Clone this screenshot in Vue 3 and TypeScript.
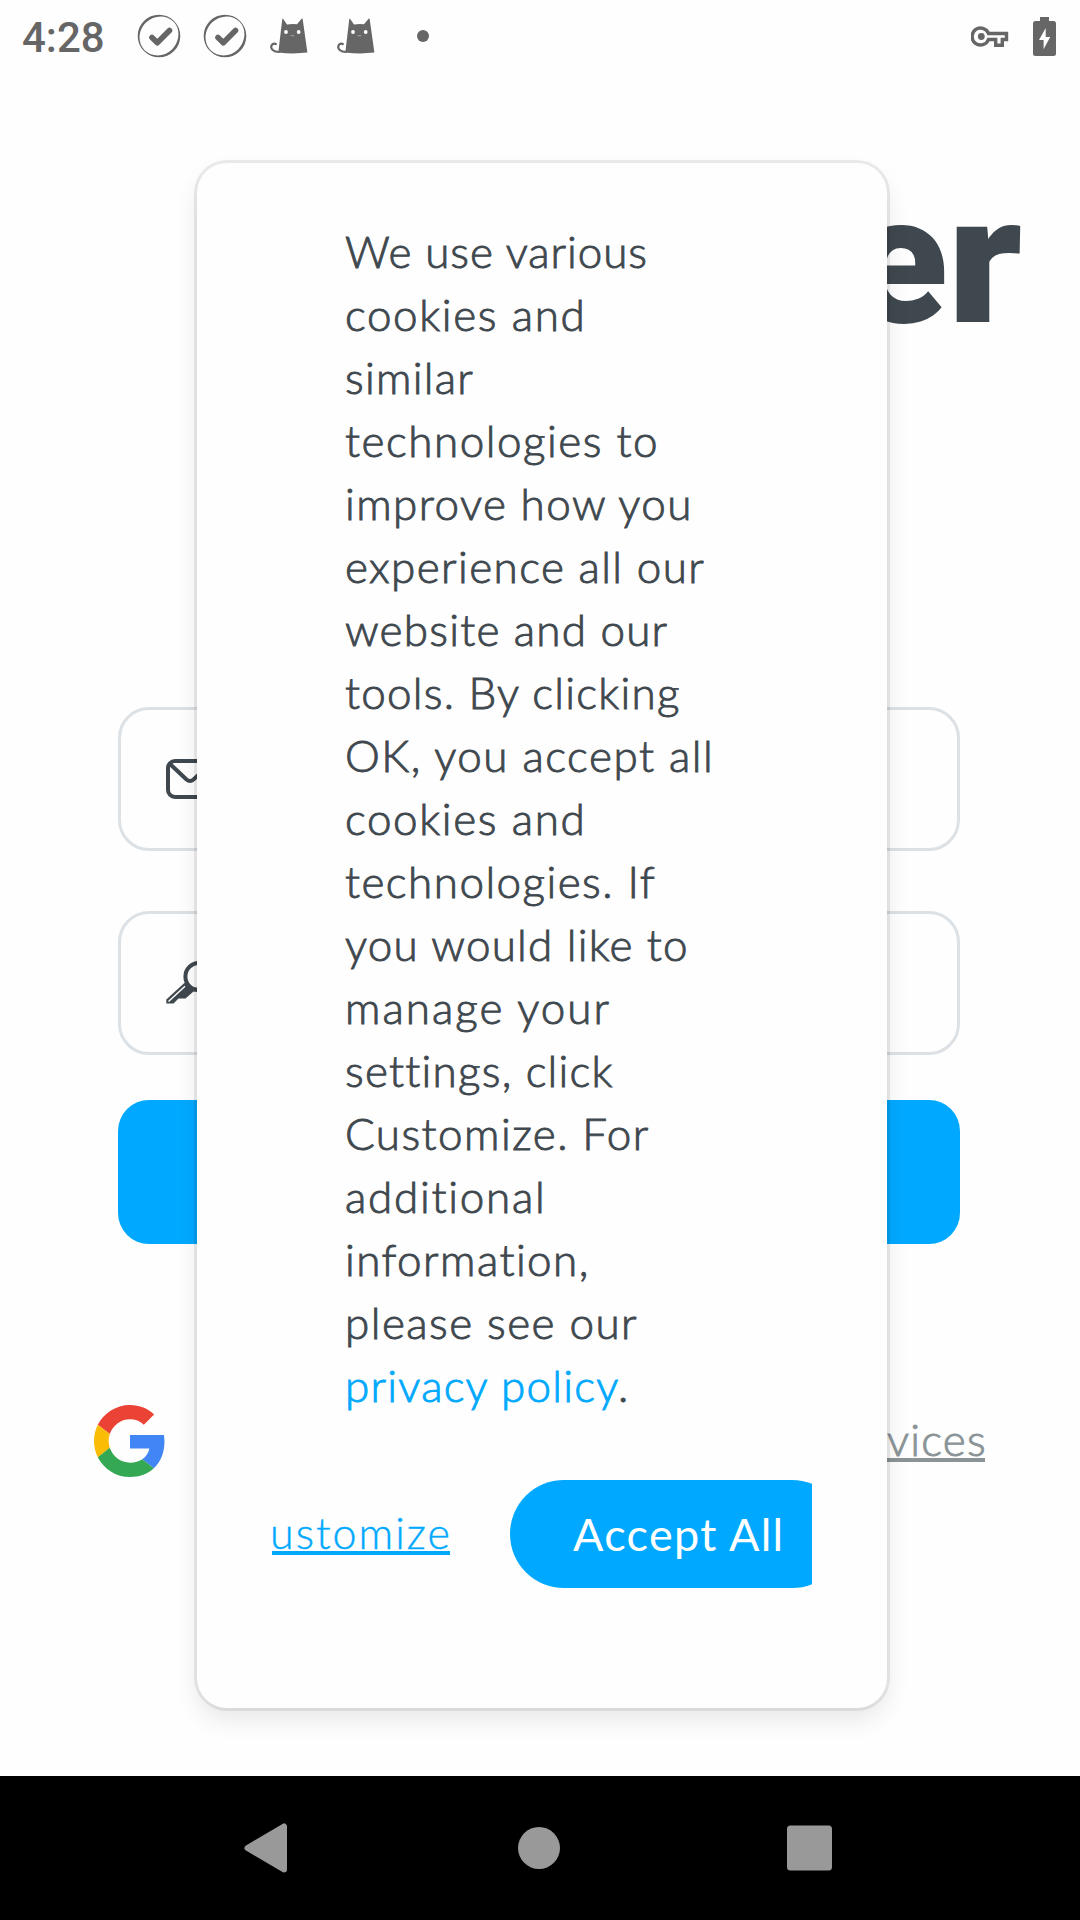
<script setup lang="ts">
interface Line {
  text: string
  gap: number
}

const lines: Line[] = [
  { text: 'We use various', gap: 0.94 },
  { text: 'cookies and', gap: 1.62 },
  { text: 'similar', gap: 1.25 },
  { text: 'technologies to', gap: 1.52 },
  { text: 'improve how you', gap: 1.42 },
  { text: 'experience all our', gap: 1.39 },
  { text: 'website and our', gap: 1.23 },
  { text: 'tools. By clicking', gap: 1.25 },
  { text: 'OK, you accept all', gap: 1.5 },
  { text: 'cookies and', gap: 1.62 },
  { text: 'technologies. If', gap: 1.46 },
  { text: 'you would like to', gap: 1.24 },
  { text: 'manage your', gap: 2.0 },
  { text: 'settings, click', gap: 1.22 },
  { text: 'Customize. For', gap: 1.46 },
  { text: 'additional', gap: 1.72 },
  { text: 'information,', gap: 1.43 },
  { text: 'please see our', gap: 1.46 },
]
</script>

<template>
  <div class="screen">
    <header class="status">
      <span class="clock">4:28</span>
      <svg v-for="n in 2" :key="'c' + n" class="check" viewBox="0 0 44 44">
        <path
          fill="#666"
          fill-rule="evenodd"
          d="M22 .7a21.3 21.3 0 1 1 0 42.6a21.3 21.3 0 1 1 0-42.6zM36.6 7.8C28.8 0 16.6 1.2 9 8.6S-.1 28.2 7.6 36.2C15.600 43.8 27.800 42.600 35 35.400S44.200 15.600 36.600 7.800z"
        />
        <path d="M15 23.500l5.300 5.200L32.500 16.500" fill="none" stroke="#666" stroke-width="5.600" stroke-linecap="round" stroke-linejoin="round" />
      </svg>
      <svg v-for="n in 2" :key="'k' + n" class="cat" viewBox="0 0 38 36">
        <path d="M9 34C3 34 .8 30.500 1.300 28.200C1.800 25.800 4.500 25.200 5.800 26" fill="none" stroke="#666" stroke-width="2.200" stroke-linecap="round" />
        <path d="M8.300 34.500L12.300 1Q12.600 0 13.200 1L17 6.500Q22 5.600 27 6.300L31.600 .8Q32.500 0 32.700 1.200L37.400 34.600Q23 36.300 8.300 34.500z" fill="#666" />
        <circle cx="16" cy="14" r="1.900" fill="#fff" />
        <circle cx="28.700" cy="14" r="1.900" fill="#fff" />
        <path d="M20.500 17.700h3.600" stroke="#999" stroke-width="1.200" />
      </svg>
      <i class="dot"></i>
      <svg class="vpn" viewBox="0 0 38 22">
        <path d="M17.500 7.500H35.500V13.500H31.300V19.300H24.700V13.500H17.500A8.500 8.500 0 1 1 17.500 7.500z" fill="none" stroke="#666" stroke-width="3.400" />
        <circle cx="10.300" cy="10.500" r="3.400" fill="#666" />
      </svg>
      <svg class="battery" viewBox="0 0 23 39">
        <path d="M7 0h9v4h4.500Q23 4 23 6.500v30Q23 39 20.500 39h-18Q0 39 0 36.500v-30Q0 4 2.500 4H7z" fill="#666" />
        <path d="M12.700 11L6 23h4.600v9.300L17.200 20h-4.500z" fill="#fff" />
      </svg>
    </header>

    <main class="page">
      <div class="logo"><span class="e">e</span><span class="r">r</span></div>
      <div class="field first">
        <svg class="icon" viewBox="0 0 48 40">
          <rect x="2" y="2" width="44" height="36" rx="7" fill="none" stroke="#3f484e" stroke-width="4" />
          <path d="M4 5L20.500 20.500Q24 23.500 27.500 20.500L44 5" fill="none" stroke="#3f484e" stroke-width="4" />
        </svg>
      </div>
      <div class="field second">
        <svg class="icon key" viewBox="0 0 48 44">
          <circle cx="33" cy="15.500" r="13.600" fill="none" stroke="#3f484e" stroke-width="4" />
          <path d="M20.500 20L.3 38.500V42.600H7.500L12.500 37.500H19.500L27.500 30.500H32V26.500H26z" fill="#3f484e" />
          <path d="M19 25.200L2.500 40.500" stroke="#fff" stroke-width="1.500" />
        </svg>
      </div>
      <div class="submit"></div>
      <div class="social">
        <svg class="google" viewBox="0 0 48 48">
          <path fill="#EA4335" d="M24 9.500c3.540 0 6.710 1.220 9.210 3.600l6.850-6.850C35.900 2.380 30.470 0 24 0 14.620 0 6.510 5.380 2.560 13.220l7.980 6.190C12.430 13.720 17.740 9.500 24 9.500z" />
          <path fill="#4285F4" d="M46.980 24.550c0-1.570-.15-3.090-.38-4.550H24v9.020h12.940c-.58 2.960-2.260 5.480-4.780 7.180l7.730 6c4.510-4.180 7.090-10.360 7.090-17.650z" />
          <path fill="#FBBC05" d="M10.530 28.590c-.48-1.450-.76-2.990-.76-4.590s.27-3.140.76-4.590l-7.980-6.190C.92 16.460 0 20.120 0 24c0 3.880.92 7.540 2.560 10.780l7.970-6.190z" />
          <path fill="#34A853" d="M24 48c6.480 0 11.930-2.130 15.890-5.810l-7.730-6c-2.150 1.450-4.920 2.300-8.160 2.300-6.260 0-11.570-4.220-13.470-9.910l-7.980 6.190C6.510 42.620 14.620 48 24 48z" />
        </svg>
        <a class="services">vices</a>
      </div>

      <section class="dialog">
        <div class="copy">
          <div v-for="(line, i) in lines" :key="i" class="line" :style="{ letterSpacing: line.gap + 'px' }">{{ line.text }}</div>
          <div class="line"><a class="policy">privacy policy</a>.</div>
        </div>
        <div class="actions">
          <a class="customize">ustomize</a>
          <div class="accept">Accept All</div>
        </div>
      </section>
    </main>

    <nav class="nav">
      <svg viewBox="0 0 1080 144">
        <path d="M247.500 72L284 50.500V93.500z" fill="#999" stroke="#999" stroke-width="6" stroke-linejoin="round" />
        <circle cx="539" cy="72" r="21" fill="#999" />
        <rect x="787" y="49.500" width="45" height="45" rx="3.500" fill="#999" />
      </svg>
    </nav>
  </div>
</template>

<style>
body {
  background: #fff;
}
</style>

<style scoped>
.screen {
  width: 1080px;
  height: 1920px;
  display: flex;
  flex-direction: column;
  overflow: hidden;
  background: #fefefe;
  font-family: Lato, "Liberation Sans", sans-serif;
  color: #3f484e;
}
.status {
  height: 72px;
  display: flex;
  align-items: center;
  box-sizing: border-box;
  padding: 0 24px 0 22px;
  flex: none;
}
.clock {
  width: 115px;
  font: 500 42px/72px Roboto, sans-serif;
  color: #666;
  margin-top: 4px;
}
.check {
  width: 44px;
  height: 44px;
  margin-right: 22px;
}
.cat {
  width: 38px;
  height: 36px;
  margin: 0 28px 0 1px;
}
.dot {
  width: 12px;
  height: 12px;
  border-radius: 50%;
  background: #666;
  margin-left: 14px;
}
.vpn {
  width: 38px;
  height: 22px;
  margin: 2px 24px 0 auto;
}
.battery {
  width: 23px;
  height: 39px;
}
.page {
  position: relative;
  flex: 1;
}
.logo {
  height: 200px;
  margin: 89px 58px 0 0;
  display: flex;
  justify-content: flex-end;
  font: 900 180px/200px Roboto, sans-serif;
  color: #3f484e;
}
.logo .r {
  transform: scaleX(1.1);
  transform-origin: right;
  margin-left: 6px;
}
.field {
  box-sizing: border-box;
  width: 842px;
  height: 144px;
  margin-left: 118px;
  border: 3px solid #dce1e5;
  border-radius: 31px;
  display: flex;
  align-items: center;
  padding-left: 45px;
}
.first {
  margin-top: 346px;
}
.second {
  margin-top: 60px;
}
.icon {
  width: 48px;
  height: 40px;
}
.key {
  height: 44px;
}
.submit {
  width: 842px;
  height: 144px;
  margin: 45px 0 0 118px;
  border-radius: 31px;
  background: #00a9ff;
}
.social {
  display: flex;
  justify-content: space-between;
  margin: 161px 95px 0 94px;
}
.google {
  width: 72px;
  height: 72px;
}
.services {
  width: 98px;
  height: 53px;
  border-bottom: 4px solid #8a9497;
  color: #8a9497;
  font-size: 44px;
  line-height: 69px;
  font-weight: 300;
  letter-spacing: 1.2px;
  -webkit-text-stroke: 0.9px;
}
.dialog {
  position: absolute;
  left: 197px;
  top: 91px;
  width: 690px;
  height: 1545px;
  box-sizing: border-box;
  padding: 57px 75px 0;
  border-radius: 30px;
  background: #fefefe;
  box-shadow: 0 0 0 3px rgba(0, 0, 0, 0.075), 0 12px 24px rgba(0, 0, 0, 0.09);
}
.copy {
  padding-left: 73px;
}
.line {
  height: 63px;
  font-size: 44px;
  line-height: 63px;
  font-weight: 300;
  letter-spacing: 1.22px;
  white-space: nowrap;
  -webkit-text-stroke: 0.9px;
}
.policy {
  color: #00a9ff;
}
.actions {
  width: 540px;
  height: 108px;
  margin-top: 63px;
  display: flex;
  overflow: hidden;
}
.customize {
  box-sizing: border-box;
  width: 178px;
  height: 75px;
  border-bottom: 4px solid #00a9ff;
  color: #00a9ff;
  font-size: 43px;
  line-height: 105px;
  font-weight: 300;
  letter-spacing: 2px;
  text-indent: -2px;
  -webkit-text-stroke: 0.4px;
  flex: none;
}
.accept {
  flex: none;
  width: 336px;
  height: 108px;
  box-sizing: border-box;
  padding-left: 63px;
  margin-left: 60px;
  border-radius: 54px;
  background: #00a9ff;
  color: #fff;
  font-size: 45px;
  line-height: 108px;
  font-weight: 400;
  letter-spacing: 1.3px;
}
.nav {
  height: 144px;
  flex: none;
  background: #000;
}
.nav svg {
  display: block;
  width: 1080px;
  height: 144px;
}
</style>
